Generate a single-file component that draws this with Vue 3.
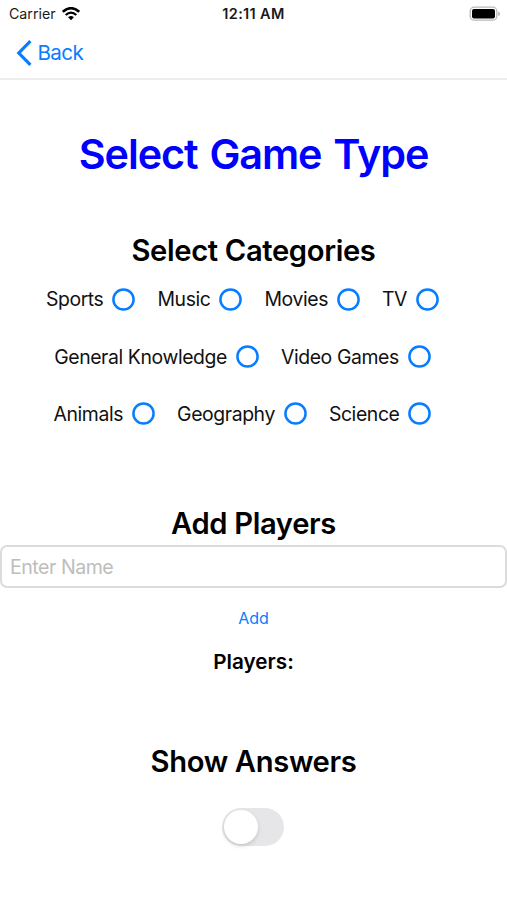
<script setup>
import { ref } from 'vue'

const rows = [
  ['Sports', 'Music', 'Movies', 'TV'],
  ['General Knowledge', 'Video Games'],
  ['Animals', 'Geography', 'Science'],
]
const selected = ref([])
const name = ref('')
const showAnswers = ref(false)

function toggle(category) {
  selected.value = selected.value.includes(category)
    ? selected.value.filter((c) => c !== category)
    : [...selected.value, category]
}
</script>

<template>
  <div class="screen">
    <header class="status">
      <div class="carrier">
        <span>Carrier</span>
        <svg class="wifi" width="18" height="14" viewBox="0 0 18 14">
          <path d="M0.8 4.9 Q9 -2.5 17.2 4.9" fill="none" stroke="#000" stroke-width="2.6" />
          <path d="M3.7 8 Q9 3.2 14.3 8" fill="none" stroke="#000" stroke-width="2.3" />
          <path d="M6.1 10.3 Q9 7.6 11.9 10.3 L9 13.3 Z" fill="#000" />
        </svg>
      </div>
      <span class="time">12:11 AM</span>
      <svg class="battery" width="32" height="16" viewBox="0 0 32 16">
        <rect x="1.2" y="1.2" width="26.6" height="13" rx="4" fill="#fff" stroke="#b9b9b9" stroke-width="1.3" />
        <rect x="3" y="3" width="23" height="9.4" rx="2" fill="#000" />
        <path d="M29.2 5.4 Q31 6 31 7.7 Q31 9.4 29.2 10 Z" fill="#b0b0b0" />
      </svg>
    </header>
    <nav class="nav">
      <svg width="16" height="26" viewBox="0 0 16 26">
        <path d="M14.4 1.2 L2.8 13 L14.4 24.8" fill="none" stroke="#087dff" stroke-width="3.2" />
      </svg>
      <span class="back">Back</span>
    </nav>
    <main>
      <h1>Select Game Type</h1>
      <h2 class="categories-title">Select Categories</h2>
      <section class="categories">
        <div v-for="(row, i) in rows" :key="i" class="row">
          <div v-for="category in row" :key="category" class="category" @click="toggle(category)">
            <span>{{ category }}</span>
            <svg class="circle" :class="{ on: selected.includes(category) }" width="23" height="23" viewBox="0 0 23 23">
              <circle cx="11.5" cy="11.5" r="10.1" />
            </svg>
          </div>
        </div>
      </section>
      <h2 class="players-title">Add Players</h2>
      <input v-model="name" class="name" placeholder="Enter Name" />
      <button class="add">Add</button>
      <h3>Players:</h3>
      <h2 class="answers-title">Show Answers</h2>
      <div class="switch" :class="{ on: showAnswers }" @click="showAnswers = !showAnswers">
        <div class="knob"></div>
      </div>
    </main>
  </div>
</template>

<style>
body {
  background: #fff;
}
</style>

<style scoped>
.screen {
  box-sizing: border-box;
  width: 507px;
  height: 900px;
  overflow: hidden;
  background: #fff;
  color: #000;
  font-family: Inter, "Liberation Sans", sans-serif;
}
.status {
  display: grid;
  grid-template-columns: 1fr auto 1fr;
  height: 27px;
  padding: 0 6px 0 9px;
  align-items: center;
  font-size: 14.2px;
  color: #1a1a1a;
}
.carrier {
  display: flex;
  align-items: center;
  gap: 6px;
}
.time {
  font-size: 14.5px;
  font-weight: 600;
  letter-spacing: 0.35px;
  margin-right: 3px;
}
.battery {
  justify-self: end;
}
.nav {
  display: flex;
  box-sizing: border-box;
  height: 53px;
  padding: 0 0 0 16px;
  align-items: center;
  gap: 5.5px;
  border-bottom: 2px solid #ededed;
  color: #087dff;
}
.back {
  font-size: 20.6px;
  line-height: 26px;
  letter-spacing: -0.6px;
}
main {
  display: flex;
  flex-direction: column;
  align-items: center;
}
h1,
h2,
h3 {
  margin: 0;
  font-weight: 600;
  white-space: nowrap;
}
h1 {
  margin-top: 49px;
  font-size: 41.3px;
  line-height: 50px;
  letter-spacing: -1.05px;
  word-spacing: 2.5px;
  color: #00f;
}
h2 {
  font-size: 29.2px;
  line-height: 36px;
  letter-spacing: -0.36px;
}
.categories-title {
  margin-top: 54px;
}
.categories {
  display: flex;
  flex-direction: column;
  align-items: center;
  gap: 33px;
  margin-top: 18px;
  padding-right: 22px;
}
.row {
  display: flex;
  gap: 22px;
}
.category {
  display: flex;
  height: 24.4px;
  align-items: center;
  gap: 9px;
  font-size: 19.4px;
  letter-spacing: -0.4px;
  color: #111;
}
.circle {
  fill: none;
  stroke: #087dff;
  stroke-width: 2.5;
}
.circle.on {
  fill: #087dff;
}
.players-title {
  margin-top: 80px;
}
.name {
  box-sizing: border-box;
  width: 507px;
  height: 43px;
  margin: 3px 0 0;
  padding: 0 8px;
  border: 2px solid #dcdcdc;
  border-radius: 7px;
  outline: 0;
  background: #fff;
  font: 19.6px Inter, "Liberation Sans", sans-serif;
  letter-spacing: -0.5px;
}
.name::placeholder {
  color: #bdbdbd;
  opacity: 1;
}
.add {
  margin: 20px 0 0;
  padding: 0;
  border: 0;
  background: none;
  color: #087dff;
  font: 16px/20px Inter, "Liberation Sans", sans-serif;
}
h3 {
  margin-top: 21px;
  font-size: 20.7px;
  line-height: 26px;
}
.answers-title {
  margin-top: 69px;
}
.switch {
  box-sizing: border-box;
  width: 62px;
  height: 38px;
  margin: 28px 1px 0 0;
  padding: 2px;
  border-radius: 19px;
  background: #e6e6e8;
}
.knob {
  width: 34px;
  height: 34px;
  border-radius: 50%;
  background: #fff;
  box-shadow: 0 2px 4px rgba(0, 0, 0, 0.14);
}
.switch.on {
  background: #34c759;
}
.switch.on .knob {
  margin-left: auto;
}
</style>
